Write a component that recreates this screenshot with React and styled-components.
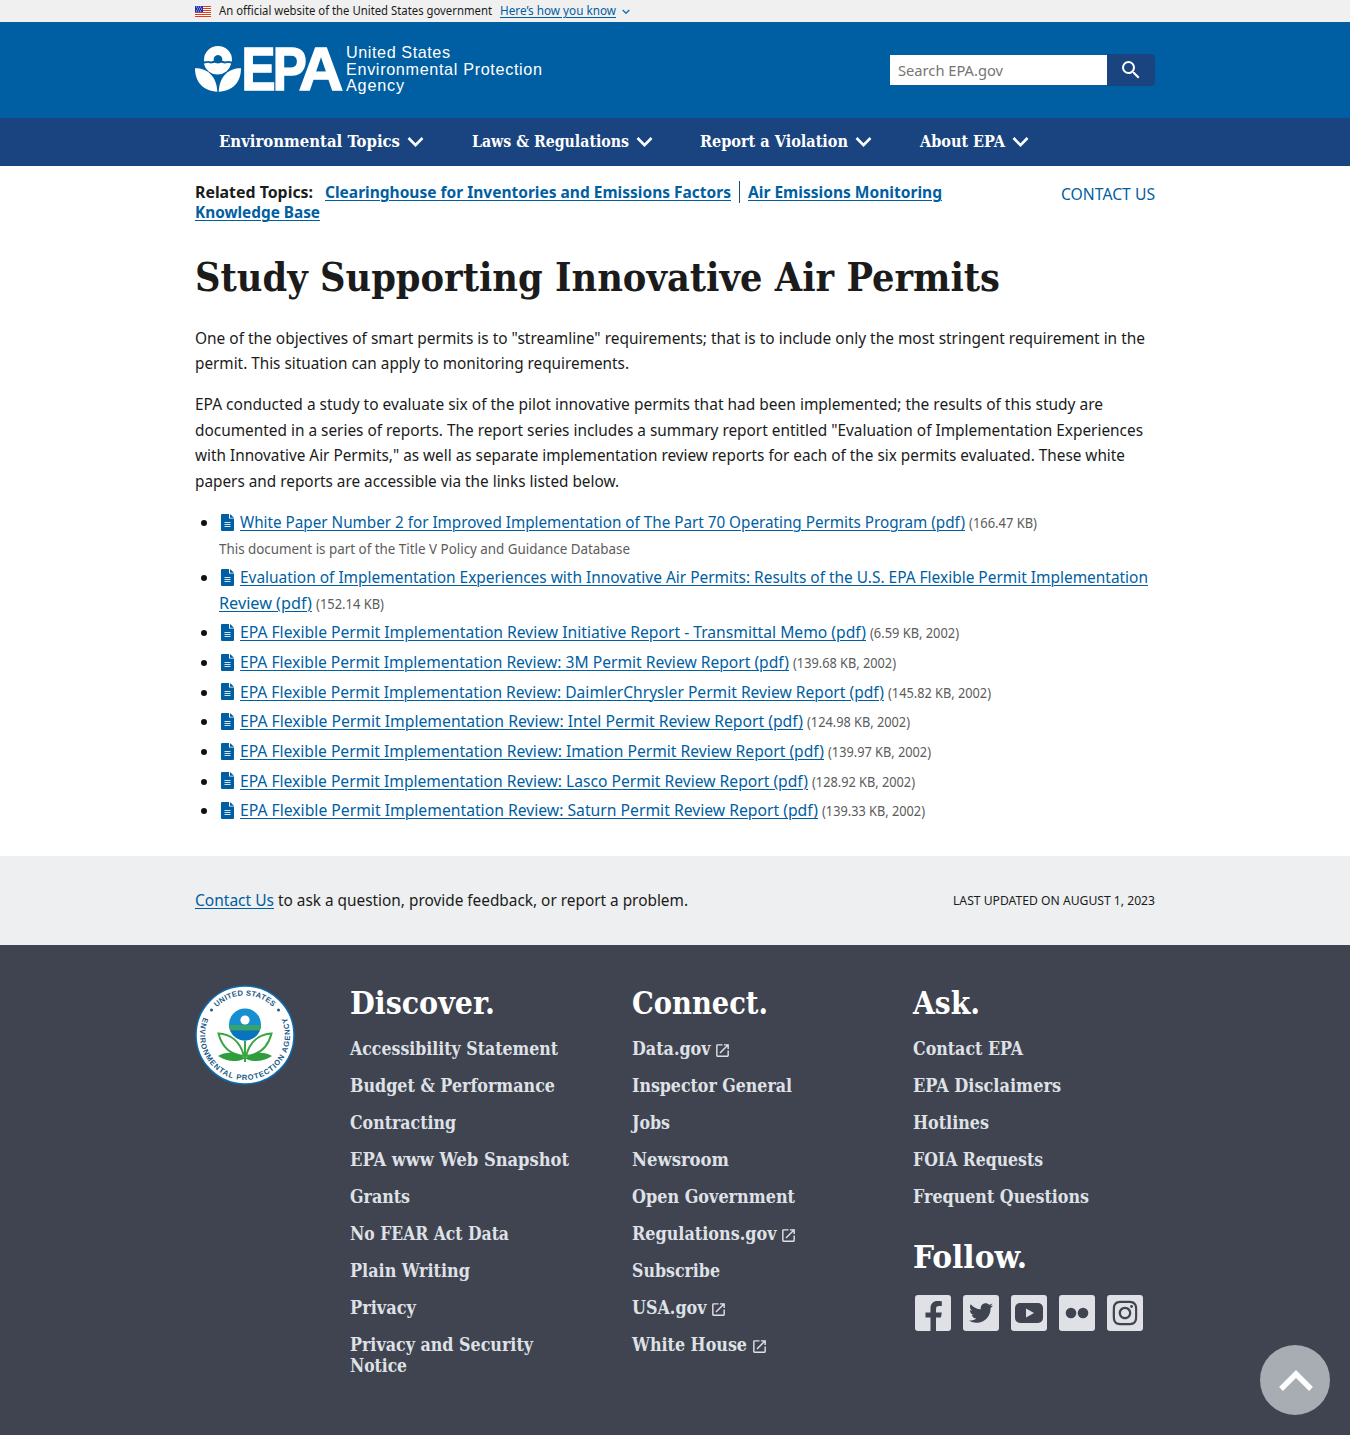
import React, { useLayoutEffect, useRef } from "react";
import styled, { createGlobalStyle } from "styled-components";
import { MdOpenInNew, MdSearch } from "react-icons/md";
import { FaTwitter, FaInstagram } from "react-icons/fa";

const sans = `"Noto Sans", "Open Sans", sans-serif`;
const serif = `"DejaVu Serif Condensed", "DejaVu Serif", serif`;

const GlobalStyle = createGlobalStyle`
  *, *::before, *::after { box-sizing: border-box; }
  body { margin: 0; background: #fff; color: #1b1b1b; font: 15.8px/25.44px ${sans}; }
  h1, h2, p, ul { margin: 0; padding: 0; }
  svg { display: block; }
`;

const Measure = styled.span`
  display: inline-block;
  white-space: pre;
  text-decoration: inherit;
`;
const Run = styled.span`
  display: inline-block;
  transform-origin: 0 50%;
  text-decoration: inherit;
`;

/* Condenses or widens a run of text so that it sets to a given measure. */
function Fit({ w, children }) {
  const ref = useRef(null);
  useLayoutEffect(() => {
    const el = ref.current;
    el.style.transform = "none";
    el.style.transform = `scaleX(${w / el.getBoundingClientRect().width})`;
  }, [w, children]);
  return <Measure style={{ width: w }}><Run ref={ref}>{children}</Run></Measure>;
}

const Container = styled.div`
  width: 960px;
  margin: 0 auto;
`;

const Link = styled.a`
  color: #005ea2;
  text-decoration: underline;
  text-decoration-thickness: 1px;
  text-underline-offset: 1.5px;
`;

/* Government banner */
const Banner = styled.div`
  height: 22px;
  background: #f0f0f0;
  font-size: 12px;
  line-height: 22px;
`;
const BannerRow = styled(Container)`
  display: flex;
  align-items: center;
`;
const BannerText = styled.span`
  margin: 0 8px 0 8px;
`;
const BannerChevron = styled.svg`
  margin: 2px 0 0 6px;
`;

/* Header */
const Header = styled.header`
  height: 96px;
  background: #005ea2;
`;
const HeaderRow = styled(Container)`
  display: flex;
  justify-content: space-between;
  padding-top: 20px;
`;
const SearchForm = styled.form`
  display: flex;
  margin-top: 13px;
  height: 30px;
`;
const SearchInput = styled.div`
  width: 217px;
  padding-left: 8px;
  background: #fff;
  color: #757575;
  font-size: 14.9px;
  line-height: 31px;
`;
const SearchButton = styled.button`
  display: flex;
  align-items: center;
  justify-content: center;
  width: 48px;
  height: 32px;
  margin-top: -1px;
  padding: 0;
  border: 0;
  border-radius: 0 4px 4px 0;
  background: #1a4480;
  color: #fff;
`;

/* Primary navigation */
const Nav = styled.nav`
  height: 48px;
  background: #1a4480;
`;
const NavRow = styled(Container)`
  display: flex;
  gap: 47.6px;
  padding-left: 24px;
`;
const NavItem = styled.a`
  display: flex;
  align-items: center;
  height: 48px;
  color: #fff;
  font: bold 16.5px/20px ${serif};
`;
const NavChevron = styled.svg`
  margin: 0 0 0 7px;
`;

/* Related topics */
const TopicsRow = styled(Container)`
  display: flex;
  justify-content: space-between;
  height: 74px;
  padding-top: 15px;
`;
const Topics = styled.div`
  font-weight: 700;
  line-height: 20.4px;
`;
const TopicLine = styled.div`
  display: flex;
  height: 20.4px;
  align-items: center;
  margin-top: ${(p) => (p.$first ? "1px" : "0")};
`;
const TopicLabel = styled.span`
  margin-right: 12px;
`;
const TopicDivider = styled.span`
  width: 1px;
  height: 22px;
  margin: 0 8px;
  background: #1b4d78;
`;
const ContactLink = styled.a`
  margin-top: 1px;
  color: #005ea2;
`;

/* Article */
const Article = styled(Container)`
  height: 616px;
`;
const Title = styled.h1`
  height: 74px;
  font: bold 39.5px/74px ${serif};
`;
const Prose = styled.div`
  padding-top: 12px;
`;
const Paragraph = styled.p`
  padding-bottom: 15.6px;
`;
const Line = styled.span`
  display: block;
  height: 25.44px;
  white-space: nowrap;
`;
const DocList = styled.ul`
  list-style: none;
  padding-top: 0.3px;
`;
const DocItem = styled.li`
  display: flex;
  margin-bottom: 4.24px;
`;
const Bullet = styled.span`
  flex: none;
  width: 6px;
  height: 6px;
  margin: 10px 12px 0 6px;
  border-radius: 50%;
  background: #111;
`;
const DocIcon = styled.svg`
  display: inline-block;
  margin: 0 6px 0 2px;
  vertical-align: -2.5px;
`;
const Meta = styled.span`
  color: #5c5c5c;
  font-size: 13.8px;
  margin-left: ${(p) => (p.$gap ? "4px" : "0")};
`;

/* Update band */
const Band = styled.div`
  height: 89px;
  background: #edeff0;
`;
const BandRow = styled(Container)`
  display: flex;
  justify-content: space-between;
  padding-top: 32px;
`;
const Updated = styled.span`
  font-size: 12.4px;
`;

/* Footer */
const Footer = styled.footer`
  height: 490px;
  background: #3f4450;
`;
const FooterGrid = styled(Container)`
  display: grid;
  grid-template-columns: 155px 282px 281px 1fr;
  padding-top: 40px;
`;
const FooterHeading = styled.h2`
  height: 36px;
  margin: ${(p) => (p.$spaced ? "32px 0 20px" : "0 0 16.5px")};
  color: #fff;
  font: bold 31.5px/36px ${serif};
`;
const FooterLink = styled.a`
  display: flex;
  flex-direction: ${(p) => (p.$stack ? "column" : "row")};
  margin-bottom: 16.1px;
  color: #dfe1e6;
  font: bold 17.8px/21px ${serif};
`;
const External = styled(MdOpenInNew)`
  margin: 4px 0 0 3.5px;
`;
const Social = styled.div`
  display: flex;
  gap: 12px;
  padding-left: 2px;
`;
const Tile = styled.a`
  display: flex;
  align-items: center;
  justify-content: center;
  width: 36px;
  height: 36px;
  border-radius: 3px;
  background: #dfe1e6;
  color: #3f4450;
`;
const BackToTop = styled.button`
  position: fixed;
  right: 20px;
  bottom: 20px;
  display: flex;
  align-items: center;
  justify-content: center;
  width: 70px;
  height: 70px;
  padding: 0 0 0 2px;
  border: 0;
  border-radius: 50%;
  background: #a8acb3;
`;

function Flag() {
  return (
    <svg width="16" height="11" viewBox="0 0 16 11">
      <rect width="16" height="11" fill="#fff" />
      {[0, 2, 4, 6, 8, 10].map((y) => <rect key={y} y={y} width="16" height="1" fill="#db3e1f" />)}
      <rect width="8" height="6" fill="#1e33b1" />
      {[1, 3, 5].map((y) => [1, 3, 5].map((x) => <rect key={`${x}-${y}`} x={x + (y === 3 ? 1 : 0)} y={y - 0.5} width="1" height="1" fill="#cdd3f5" />))}
    </svg>
  );
}

function Logo() {
  return (
    <svg width="350" height="56" viewBox="195 42 350 56" fill="#fff">
      <path d="M204 60a14 14 0 0 1 28 0l-.2 1.500-3.800-.6-3 .6-2.800-.8a4.400 4.400 0 1 0-8.400 0l-2.800.8-3-.6-3.800.6z" />
      <path d="M204.300 63.400l3.700-.7 3 .8 3.500-.8 3.500.8 3.500-.8 3.500.8 3-.8 3.200.7a14 14 0 0 1-27.400 0z" />
      <path d="M195 68.300c11.500-.3 21.500 7 22.300 23.400C203.500 91 195 82.500 195 68.300z" />
      <path d="M241 68.300c-11.500-.3-21.500 7-22.300 23.400C232.500 91 241 82.500 241 68.300z" />
      <text y="90.300" fontFamily="Liberation Sans, Arial, sans-serif" fontWeight="700" fontSize="61" stroke="#fff" strokeWidth="1.600">
        <tspan x="241.600" textLength="34" lengthAdjust="spacingAndGlyphs">E</tspan>
        <tspan x="272.800" textLength="34" lengthAdjust="spacingAndGlyphs">P</tspan>
        <tspan x="298.800" textLength="44.500" lengthAdjust="spacingAndGlyphs">A</tspan>
      </text>
      <g fontFamily="Liberation Sans, Arial, sans-serif" fontSize="16.200">
        <text x="346" y="58" textLength="104">United States</text>
        <text x="346" y="74.500" textLength="196">Environmental Protection</text>
        <text x="346" y="91.300" textLength="58">Agency</text>
      </g>
    </svg>
  );
}

function Seal() {
  return (
    <svg width="100" height="100" viewBox="0 0 100 100">
      <defs>
        <path id="seal-top" d="M18 26.800A39.500 39.500 0 0 1 82 26.800" />
        <path id="seal-bottom" d="M9.900 29.600A45 45 0 1 0 90.100 29.600" />
      </defs>
      <circle cx="50" cy="50" r="49" fill="#fff" stroke="#0b6cb0" strokeWidth="1.500" />
      <g fill="#1c5a86" fontFamily="Liberation Sans, Arial, sans-serif" fontWeight="700" fontSize="7.600">
        <text><textPath href="#seal-top" startOffset="6" textLength="62">UNITED STATES</textPath></text>
        <text><textPath href="#seal-bottom" startOffset="3" textLength="177">ENVIRONMENTAL PROTECTION AGENCY</textPath></text>
      </g>
      <circle cx="16.500" cy="25" r="1.500" fill="#1c5a86" />
      <circle cx="83.500" cy="25" r="1.500" fill="#1c5a86" />
      <circle cx="50" cy="39.500" r="16" fill="#168fd2" />
      <path d="M34 40h32a16 16 0 0 1-1.300 6H35.300A16 16 0 0 1 34 40z" fill="#38a36b" />
      <path d="M35.200 45.500h29.600a16 16 0 0 1-29.600 0z" fill="#0873be" />
      <circle cx="50" cy="35" r="4.600" fill="#fff" />
      <path d="M23.500 48.500C35 49 45 56 49 71 36 70 27 62 23.500 48.500zM76.500 48.500C65 49 55 56 51 71c13-1 22-9 25.500-22.500z" fill="#fff" stroke="#39a545" strokeWidth="2" />
      <path d="M50 56v21" stroke="#39a545" strokeWidth="2" />
      <path d="M23 71c9-5 20-4 27 2.500C57 67 68 66 77 71c-9 6-19 6.500-27 2.500-8 4-18 3.500-27-2.500z" fill="#2f9d3d" />
    </svg>
  );
}

function Doc() {
  return (
    <DocIcon width="13" height="17" viewBox="0 0 13 17">
      <path d="M0 1a1 1 0 0 1 1-1h7v4.500h5V16a1 1 0 0 1-1 1H1a1 1 0 0 1-1-1zM9 0l4 3.700H9z" fill="#005ea2" />
      <path d="M3.500 8.500h6M3.500 10.500h6M3.500 12.500h6" stroke="#d5e6f3" />
    </DocIcon>
  );
}

function Chevron() {
  return (
    <NavChevron width="17" height="12" viewBox="0 0 17 12" fill="none" stroke="#fff" strokeWidth="2.600">
      <path d="M1.500 2l7 7.200 7-7.200" />
    </NavChevron>
  );
}

const navItems = [["Environmental Topics", 181], ["Laws & Regulations", 157], ["Report a Violation", 148], ["About EPA", 85]];

const paragraphs = [
  [
    ['One of the objectives of smart permits is to "streamline" requirements; that is to include only the most stringent requirement in the', 950],
    ["permit. This situation can apply to monitoring requirements.", 434],
  ],
  [
    ["EPA conducted a study to evaluate six of the pilot innovative permits that had been implemented; the results of this study are", 908],
    ['documented in a series of reports. The report series includes a summary report entitled "Evaluation of Implementation Experiences', 948],
    ['with Innovative Air Permits," as well as separate implementation review reports for each of the six permits evaluated. These white', 930],
    ["papers and reports are accessible via the links listed below.", 424],
  ],
];

const review = "EPA Flexible Permit Implementation Review";
const docs = [
  { lines: [["White Paper Number 2 for Improved Implementation of The Part 70 Operating Permits Program (pdf)", 725]], meta: ["(166.47 KB)", 68], note: ["This document is part of the Title V Policy and Guidance Database", 411] },
  { lines: [["Evaluation of Implementation Experiences with Innovative Air Permits: Results of the U.S. EPA Flexible Permit Implementation", 908], ["Review (pdf)", 93]], meta: ["(152.14 KB)", 68] },
  { lines: [[`${review} Initiative Report - Transmittal Memo (pdf)`, 626]], meta: ["(6.59 KB, 2002)", 89] },
  { lines: [[`${review}: 3M Permit Review Report (pdf)`, 549]], meta: ["(139.68 KB, 2002)", 103] },
  { lines: [[`${review}: DaimlerChrysler Permit Review Report (pdf)`, 644]], meta: ["(145.82 KB, 2002)", 103] },
  { lines: [[`${review}: Intel Permit Review Report (pdf)`, 563]], meta: ["(124.98 KB, 2002)", 103] },
  { lines: [[`${review}: Imation Permit Review Report (pdf)`, 584]], meta: ["(139.97 KB, 2002)", 103] },
  { lines: [[`${review}: Lasco Permit Review Report (pdf)`, 568]], meta: ["(128.92 KB, 2002)", 103] },
  { lines: [[`${review}: Saturn Permit Review Report (pdf)`, 578]], meta: ["(139.33 KB, 2002)", 103] },
];

const discover = [
  [["Accessibility Statement", 208]], [["Budget & Performance", 205]], [["Contracting", 106]], [["EPA www Web Snapshot", 219]],
  [["Grants", 60]], [["No FEAR Act Data", 159]], [["Plain Writing", 120]], [["Privacy", 66]], [["Privacy and Security", 183], ["Notice", 57]],
];
const connect = [
  [["Data.gov", 78.5], true], [["Inspector General", 160]], [["Jobs", 38]], [["Newsroom", 97]], [["Open Government", 163]],
  [["Regulations.gov", 144.5], true], [["Subscribe", 88]], [["USA.gov", 74.5], true], [["White House", 115], true],
];
const ask = [["Contact EPA", 110], ["EPA Disclaimers", 148], ["Hotlines", 76], ["FOIA Requests", 130], ["Frequent Questions", 176]];

export default function App() {
  return (
    <>
      <GlobalStyle />
      <Banner>
        <BannerRow>
          <Flag />
          <BannerText><Fit w={273}>An official website of the United States government</Fit></BannerText>
          <Link><Fit w={116}>Here’s how you know</Fit></Link>
          <BannerChevron width="8" height="6" viewBox="0 0 8 6" fill="none" stroke="#2672b0" strokeWidth="1.500"><path d="M.7 1l3.300 3.300L7.300 1" /></BannerChevron>
        </BannerRow>
      </Banner>
      <Header>
        <HeaderRow>
          <Logo />
          <SearchForm>
            <SearchInput><Fit w={105}>Search EPA.gov</Fit></SearchInput>
            <SearchButton type="button" aria-label="Search"><MdSearch size={24} /></SearchButton>
          </SearchForm>
        </HeaderRow>
      </Header>
      <Nav>
        <NavRow>
          {navItems.map(([t, w]) => <NavItem key={t}><Fit w={w}>{t}</Fit><Chevron /></NavItem>)}
        </NavRow>
      </Nav>
      <TopicsRow>
        <Topics>
          <TopicLine $first>
            <TopicLabel><Fit w={118}>Related Topics:</Fit></TopicLabel>
            <Link><Fit w={406}>Clearinghouse for Inventories and Emissions Factors</Fit></Link>
            <TopicDivider />
            <Link><Fit w={194}>Air Emissions Monitoring</Fit></Link>
          </TopicLine>
          <TopicLine><Link><Fit w={125}>Knowledge Base</Fit></Link></TopicLine>
        </Topics>
        <ContactLink><Fit w={94}>CONTACT US</Fit></ContactLink>
      </TopicsRow>
      <Article as="main">
        <Title><Fit w={805}>Study Supporting Innovative Air Permits</Fit></Title>
        <Prose>
          {paragraphs.map((lines, i) => (
            <Paragraph key={i}>{lines.map(([t, w]) => <Line key={t}><Fit w={w}>{t}</Fit></Line>)}</Paragraph>
          ))}
          <DocList>
            {docs.map((d) => (
              <DocItem key={d.lines[0][0]}>
                <Bullet />
                <div>
                  {d.lines.map(([t, w], i) => (
                    <Line key={t}>
                      {i === 0 && <Doc />}
                      <Link><Fit w={w}>{t}</Fit></Link>
                      {i === d.lines.length - 1 && <Meta $gap><Fit w={d.meta[1]}>{d.meta[0]}</Fit></Meta>}
                    </Line>
                  ))}
                  {d.note && <Line><Meta><Fit w={d.note[1]}>{d.note[0]}</Fit></Meta></Line>}
                </div>
              </DocItem>
            ))}
          </DocList>
        </Prose>
      </Article>
      <Band>
        <BandRow>
          <span><Link><Fit w={79}>Contact Us</Fit></Link><Fit w={414}> to ask a question, provide feedback, or report a problem.</Fit></span>
          <Updated><Fit w={202}>LAST UPDATED ON AUGUST 1, 2023</Fit></Updated>
        </BandRow>
      </Band>
      <Footer>
        <FooterGrid>
          <Seal />
          <div>
            <FooterHeading><Fit w={145}>Discover.</Fit></FooterHeading>
            {discover.map((l) => <FooterLink key={l[0][0]} $stack>{l.map(([t, w]) => <Fit key={t} w={w}>{t}</Fit>)}</FooterLink>)}
          </div>
          <div>
            <FooterHeading><Fit w={136}>Connect.</Fit></FooterHeading>
            {connect.map(([[t, w], ext]) => <FooterLink key={t}><Fit w={w}>{t}</Fit>{ext && <External size={17} />}</FooterLink>)}
          </div>
          <div>
            <FooterHeading><Fit w={67}>Ask.</Fit></FooterHeading>
            {ask.map(([t, w]) => <FooterLink key={t}><Fit w={w}>{t}</Fit></FooterLink>)}
            <FooterHeading $spaced><Fit w={114}>Follow.</Fit></FooterHeading>
            <Social>
              <Tile aria-label="Facebook">
                <svg width="36" height="36" viewBox="0 0 36 36" fill="currentColor"><path d="M15.500 36V22.500H10.500v-5h5V13.300c0-4.600 2.900-7.300 7-7.300 1.700 0 3.500.2 4.300.3v4.700h-2.600c-2.500 0-3.200 1.200-3.200 3v3.500h5.800l-.9 5H21V36z" /></svg>
              </Tile>
              <Tile aria-label="Twitter"><FaTwitter size={24} /></Tile>
              <Tile aria-label="YouTube">
                <svg width="28" height="20" viewBox="0 0 28 20"><rect width="28" height="20" rx="5" fill="#3f4450" /><path d="M11 5.500l8 4.500-8 4.500z" fill="#dfe1e6" /></svg>
              </Tile>
              <Tile aria-label="Flickr">
                <svg width="24" height="12" viewBox="0 0 24 12" fill="currentColor"><circle cx="6" cy="6" r="5.300" /><circle cx="18" cy="6" r="5.300" /></svg>
              </Tile>
              <Tile aria-label="Instagram"><FaInstagram size={28} /></Tile>
            </Social>
          </div>
        </FooterGrid>
      </Footer>
      <BackToTop aria-label="Back to top">
        <svg width="36" height="24" viewBox="0 0 36 24" fill="none" stroke="#fff" strokeWidth="5.500"><path d="M3 21L18 6l15 15" /></svg>
      </BackToTop>
    </>
  );
}
